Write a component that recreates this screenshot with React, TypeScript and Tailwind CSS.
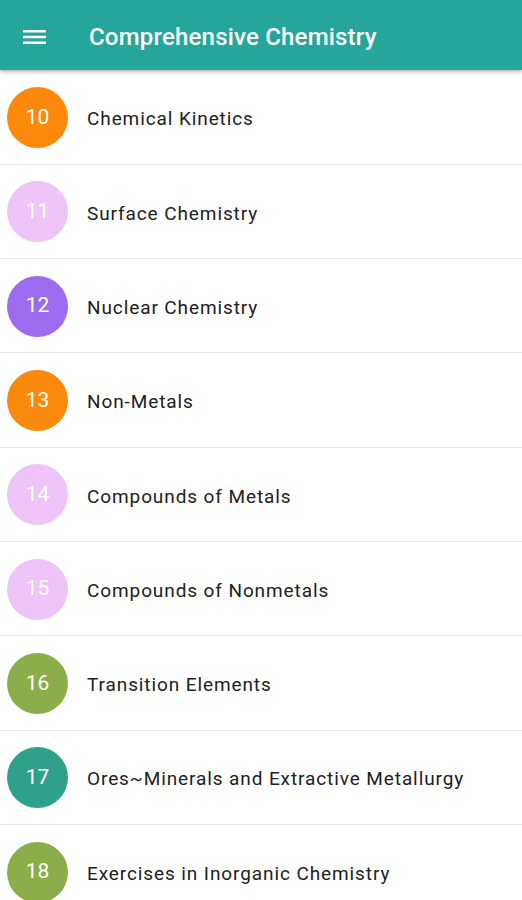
const items = [
  { n: 10, title: "Chemical Kinetics", color: "bg-[#fb8a0c]" },
  { n: 11, title: "Surface Chemistry", color: "bg-[#efc4f8]" },
  { n: 12, title: "Nuclear Chemistry", color: "bg-[#9b6cf0]" },
  { n: 13, title: "Non-Metals", color: "bg-[#fb8a0c]" },
  { n: 14, title: "Compounds of Metals", color: "bg-[#efc4f8]" },
  { n: 15, title: "Compounds of Nonmetals", color: "bg-[#efc4f8]" },
  { n: 16, title: "Transition Elements", color: "bg-[#8cae4a]" },
  { n: 17, title: "Ores~Minerals and Extractive Metallurgy", color: "bg-[#2fa08a]" },
  { n: 18, title: "Exercises in Inorganic Chemistry", color: "bg-[#8cae4a]" },
];

export default function App() {
  return (
    <div className="w-[522px] h-[900px] overflow-hidden bg-white font-['Roboto',sans-serif]">
      <header className="relative z-10 h-[70px] pt-[3px] bg-[#26a69a] flex items-center shadow-[0_2px_4px_rgba(0,0,0,0.3)]">
        <svg className="ml-[23px] w-[24px] h-[24px]" viewBox="0 0 24 24" fill="white">
          <rect x="0" y="5" width="23" height="2.6" rx="0.5" />
          <rect x="0" y="10.7" width="23" height="2.6" rx="0.5" />
          <rect x="0" y="16.4" width="23" height="2.6" rx="0.5" />
        </svg>
        <h1 className="ml-[42px] text-white text-[24px] font-medium tracking-[0.2px]">Comprehensive Chemistry</h1>
      </header>
      <ul className="pt-[0.5px]">
        {items.map((it) => (
          <li key={it.n} className="h-[94.3px] flex items-center border-b border-[#e6e6e6]">
            <div className={`ml-[7px] mt-[1px] w-[61px] h-[61px] rounded-full ${it.color} flex items-center justify-center text-white text-[21px]`}>
              {it.n}
            </div>
            <span className="ml-[19px] mt-[5px] text-[19px] tracking-[0.9px] text-[#212121]">{it.title}</span>
          </li>
        ))}
      </ul>
    </div>
  );
}
